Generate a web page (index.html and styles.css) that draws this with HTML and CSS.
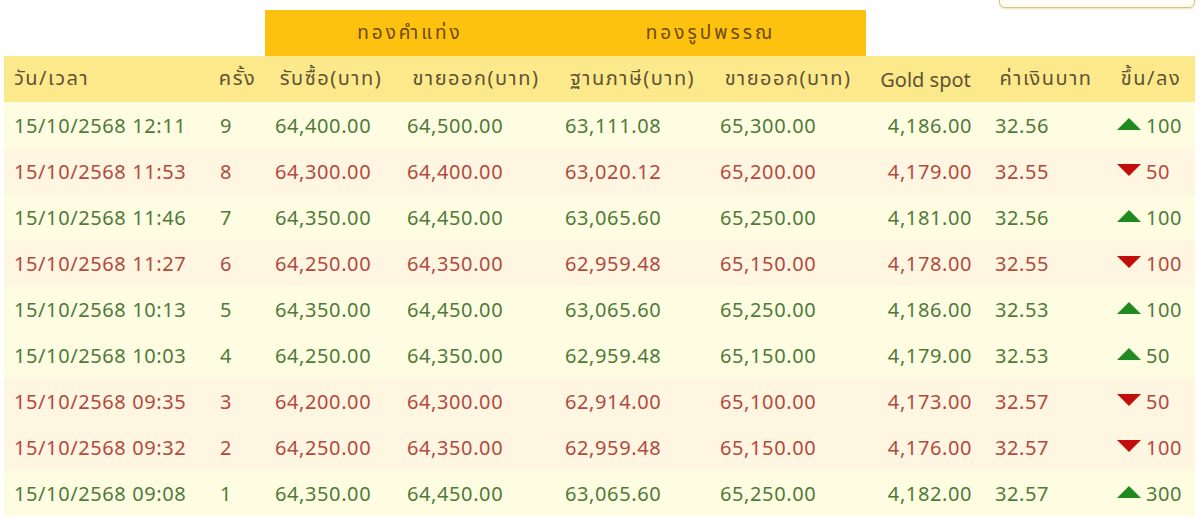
FILE: index.html
```html
<!DOCTYPE html>
<html lang="th">
<head>
<meta charset="utf-8">
<title>ราคาทองคำ</title>
<link rel="stylesheet" href="styles.css">
</head>
<body>
<div class="toolbar"><div class="search"></div></div>
<table class="prices">
  <colgroup>
    <col class="c1"><col class="c2"><col class="c3"><col class="c4"><col class="c5"><col class="c6"><col class="c7"><col class="c8"><col class="c9">
  </colgroup>
  <thead>
    <tr class="group">
      <th colspan="2" class="blank"></th>
      <th colspan="2" class="gold">ทองคำแท่ง</th>
      <th colspan="2" class="gold">ทองรูปพรรณ</th>
      <th colspan="3" class="blank"></th>
    </tr>
    <tr class="head">
      <th class="first">วัน/เวลา</th>
      <th>ครั้ง</th>
      <th>รับซื้อ(บาท)</th>
      <th>ขายออก(บาท)</th>
      <th>ฐานภาษี(บาท)</th>
      <th>ขายออก(บาท)</th>
      <th class="latin">Gold spot</th>
      <th>ค่าเงินบาท</th>
      <th>ขึ้น/ลง</th>
    </tr>
  </thead>
  <tbody>
    <tr class="up"><td>15/10/2568 12:11</td><td>9</td><td>64,400.00</td><td>64,500.00</td><td>63,111.08</td><td>65,300.00</td><td class="spot">4,186.00</td><td>32.56</td><td><span class="arrow"></span>100</td></tr>
    <tr class="down"><td>15/10/2568 11:53</td><td>8</td><td>64,300.00</td><td>64,400.00</td><td>63,020.12</td><td>65,200.00</td><td class="spot">4,179.00</td><td>32.55</td><td><span class="arrow"></span>50</td></tr>
    <tr class="up"><td>15/10/2568 11:46</td><td>7</td><td>64,350.00</td><td>64,450.00</td><td>63,065.60</td><td>65,250.00</td><td class="spot">4,181.00</td><td>32.56</td><td><span class="arrow"></span>100</td></tr>
    <tr class="down"><td>15/10/2568 11:27</td><td>6</td><td>64,250.00</td><td>64,350.00</td><td>62,959.48</td><td>65,150.00</td><td class="spot">4,178.00</td><td>32.55</td><td><span class="arrow"></span>100</td></tr>
    <tr class="up"><td>15/10/2568 10:13</td><td>5</td><td>64,350.00</td><td>64,450.00</td><td>63,065.60</td><td>65,250.00</td><td class="spot">4,186.00</td><td>32.53</td><td><span class="arrow"></span>100</td></tr>
    <tr class="up"><td>15/10/2568 10:03</td><td>4</td><td>64,250.00</td><td>64,350.00</td><td>62,959.48</td><td>65,150.00</td><td class="spot">4,179.00</td><td>32.53</td><td><span class="arrow"></span>50</td></tr>
    <tr class="down"><td>15/10/2568 09:35</td><td>3</td><td>64,200.00</td><td>64,300.00</td><td>62,914.00</td><td>65,100.00</td><td class="spot">4,173.00</td><td>32.57</td><td><span class="arrow"></span>50</td></tr>
    <tr class="down"><td>15/10/2568 09:32</td><td>2</td><td>64,250.00</td><td>64,350.00</td><td>62,959.48</td><td>65,150.00</td><td class="spot">4,176.00</td><td>32.57</td><td><span class="arrow"></span>100</td></tr>
    <tr class="up"><td>15/10/2568 09:08</td><td>1</td><td>64,350.00</td><td>64,450.00</td><td>63,065.60</td><td>65,250.00</td><td class="spot">4,182.00</td><td>32.57</td><td><span class="arrow"></span>300</td></tr>
  </tbody>
</table>
</body>
</html>
```

FILE: styles.css
```css
html, body {
  margin: 0;
  padding: 0;
  background: #ffffff;
  font-family: "Noto Sans", "Noto Sans Thai", "DejaVu Sans", sans-serif;
  overflow: hidden;
}

.toolbar {
  display: flex;
  justify-content: flex-end;
  height: 32px;
  margin-top: -24px;
  padding-right: 5px;
}

.search {
  width: 194px;
  height: 30px;
  border: 1px solid #dcc27e;
  border-radius: 6px;
  background: #fffdf5;
  box-shadow: 0 1px 2px rgba(200, 160, 60, 0.35);
}

.prices {
  margin: 2px 0 0 4px;
  width: 1191px;
  table-layout: fixed;
  border-collapse: collapse;
  border-spacing: 0;
  font-size: 20px;
}

.c1 { width: 206px; }
.c2 { width: 55px; }
.c3 { width: 132px; }
.c4 { width: 158px; }
.c5 { width: 155px; }
.c6 { width: 156px; }
.c7 { width: 119px; }
.c8 { width: 122px; }
.c9 { width: 88px; }

.group th {
  height: 46px;
  padding: 0;
  font-weight: normal;
  font-size: 19px;
}

.group .gold {
  background: #fdc20f;
  color: #6e4a0c;
  letter-spacing: 3px;
}

.head th {
  height: 46px;
  padding: 0;
  background: #fbe98b;
  color: #5f5233;
  font-weight: normal;
  text-align: center;
  white-space: nowrap;
  letter-spacing: 1.5px;
}

.head th.first {
  text-align: left;
  padding-left: 10px;
}

.head th.latin {
  letter-spacing: 0;
}

tbody td {
  height: 46px;
  padding: 0 0 0 10px;
  white-space: nowrap;
  letter-spacing: 0.6px;
}

tbody td.spot {
  text-align: right;
  padding: 0 13px 0 0;
}

tr.up {
  background: #fefde2;
  color: #4f7a3a;
}

tr.down {
  background: #fef6e1;
  color: #b24a3f;
}

.arrow {
  display: inline-block;
  width: 0;
  height: 0;
  margin-right: 5px;
  vertical-align: 3px;
  border-left: 12px solid transparent;
  border-right: 12px solid transparent;
}

tr.up .arrow {
  border-bottom: 12px solid #1f8a1f;
}

tr.down .arrow {
  border-top: 12px solid #c20d0d;
}
```
